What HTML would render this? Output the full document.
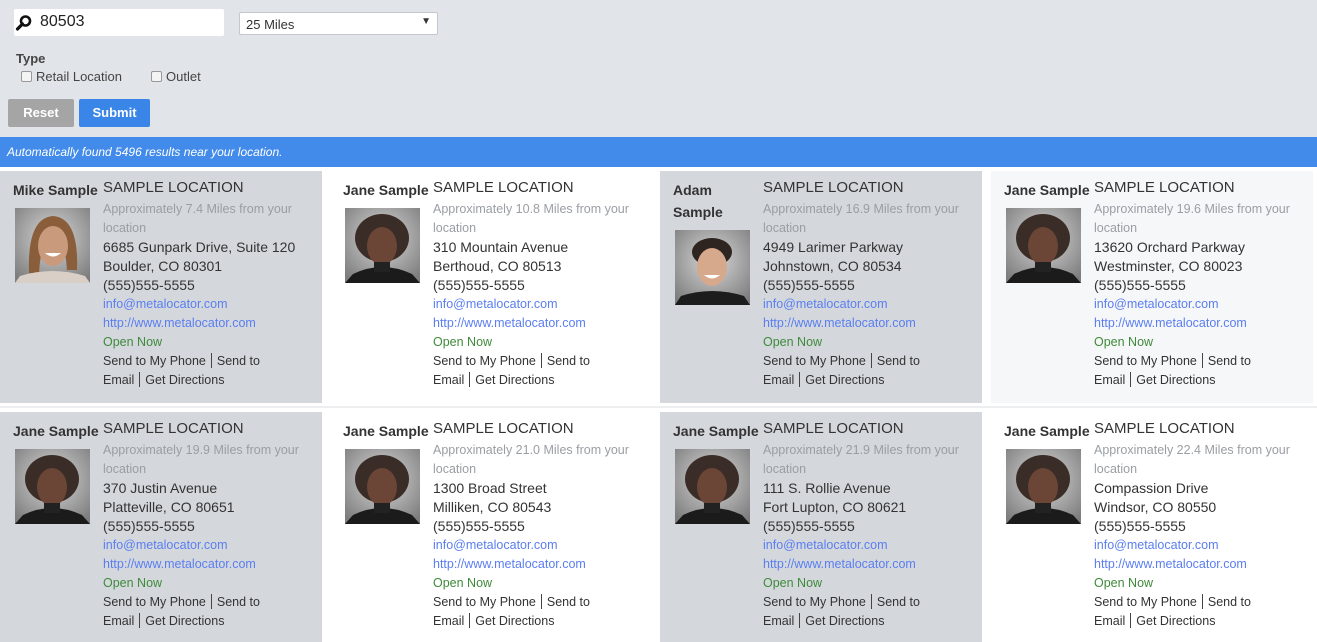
<!DOCTYPE html>
<html><head><meta charset="utf-8">
<style>
*{box-sizing:border-box;margin:0;padding:0}
body{width:1317px;height:642px;overflow:hidden;background:#fff;font-family:"Liberation Sans",sans-serif;color:#333;position:relative}
.top{position:absolute;left:0;top:0;width:1317px;height:137px;background:#e1e4e8}
.inp{position:absolute;left:14px;top:9px;width:210px;height:27px;background:#fff;border-radius:2px}
.inp span{position:absolute;left:26px;top:4px;font-size:16px;color:#222}
.sel{position:absolute;left:239px;top:12px;width:199px;height:23px;background:#fff;border:1px solid #c4c7cb;border-radius:2px;font-size:13px;padding:4px 6px;color:#333}
.sel b{position:absolute;right:6px;top:3px;font-size:10px}
.type{position:absolute;left:16px;top:51px;font-size:13px;font-weight:bold;color:#444}
.cb{position:absolute;top:69px;font-size:13px;color:#444}
.cb i{display:inline-block;width:11px;height:11px;border:1px solid #999;border-radius:2px;background:#f4f4f4;vertical-align:-1px;margin-right:4px}
.btn{position:absolute;top:99px;height:28px;color:#fff;font-weight:bold;font-size:13px;text-align:center;line-height:28px;border-radius:2px}
.bar{position:absolute;left:0;top:137px;width:1317px;height:30px;background:#428bea;color:#fff;font-style:italic;font-size:12px;line-height:30px;padding-left:7px}
.sep{position:absolute;left:0;top:406px;width:1317px;height:2px;background:#eceef0}
.card{position:absolute;width:322px}
.g{background:#d4d8dd}.l{background:#f6f7f9}.w{background:#fff}
.nm{position:absolute;left:13px;top:8px;width:90px;font-weight:bold;font-size:14px;line-height:22px;color:#333}
.ph{position:absolute;left:15px;width:75px;height:75px}
.inf{position:absolute;left:103px;top:7px;width:215px;font-size:12.5px;line-height:19px;white-space:nowrap}
.inf .t{font-size:15px;line-height:20px;color:#333;margin-bottom:2px}
.gr{color:#9a9ea3}.ad{font-size:14px;color:#333}.lk{color:#5a7ef0}.op{color:#3f8a3a}.sd{color:#333}
.sd s{text-decoration:none;border-left:1px solid #444;margin:0 5px;display:inline-block;height:15px;vertical-align:-3px}
</style></head><body>
<svg width="0" height="0" style="position:absolute">
<defs>
<radialGradient id="bg" cx="50%" cy="40%" r="70%"><stop offset="0" stop-color="#d8d8d8"/><stop offset="1" stop-color="#7d7d7d"/></radialGradient>
<symbol id="jane" viewBox="0 0 75 75"><rect width="75" height="75" fill="url(#bg)"/><ellipse cx="37" cy="30" rx="27" ry="24" fill="#3a2c26"/><ellipse cx="37" cy="38" rx="15" ry="19" fill="#6b4535"/><path d="M0 75 L8 66 Q37 52 67 66 L75 75Z" fill="#1b1b1b"/><rect x="29" y="54" width="16" height="10" fill="#222"/></symbol>
<symbol id="mike" viewBox="0 0 75 75"><rect width="75" height="75" fill="url(#bg)"/><path d="M14 65 Q12 10 38 8 Q64 10 62 62 L52 62 Q50 30 38 30 Q26 30 24 65Z" fill="#8a5e3a"/><ellipse cx="38" cy="38" rx="15" ry="20" fill="#c99a7c"/><path d="M30 45 Q38 52 46 45Z" fill="#fff"/><path d="M0 75 L5 68 Q38 58 70 68 L75 75Z" fill="#d9cfc6"/></symbol>
<symbol id="adam" viewBox="0 0 75 75"><rect width="75" height="75" fill="url(#bg)"/><ellipse cx="37" cy="22" rx="20" ry="14" fill="#2e2520"/><ellipse cx="37" cy="37" rx="15" ry="19" fill="#d6a88c"/><path d="M29 45 Q37 52 45 45Z" fill="#fff"/><path d="M0 75 L6 66 Q37 56 69 66 L75 75Z" fill="#1c1c1c"/></symbol>
</defs></svg>

<div class="top"></div>
<div class="inp"><svg style="position:absolute;left:1px;top:5px" width="18" height="18" viewBox="0 0 18 18"><circle cx="10.5" cy="7" r="4.5" fill="none" stroke="#111" stroke-width="2.6"/><path d="M7.5 10 L2.5 15" stroke="#111" stroke-width="3.2" stroke-linecap="round"/></svg><span>80503</span></div>
<div class="sel">25 Miles<b>▼</b></div>
<div class="type">Type</div>
<div class="cb" style="left:21px"><i></i>Retail Location</div>
<div class="cb" style="left:151px"><i></i>Outlet</div>
<div class="btn" style="left:8px;width:66px;background:#a5a5a5">Reset</div>
<div class="btn" style="left:79px;width:71px;background:#3a86e8">Submit</div>
<div class="bar">Automatically found 5496 results near your location.</div>
<div class="sep"></div>

<div class="card g" style="left:0;top:171px;height:232px"><div class="nm">Mike Sample</div><svg class="ph" style="top:37px"><use href="#mike"/></svg>
<div class="inf"><div class="t">SAMPLE LOCATION</div><div class="gr">Approximately 7.4 Miles from your<br>location</div><div class="ad">6685 Gunpark Drive, Suite 120<br>Boulder, CO 80301<br>(555)555-5555</div><div class="lk">info@metalocator.com<br>http://www.metalocator.com</div><div class="op">Open Now</div><div class="sd">Send to My Phone<s></s>Send to<br>Email<s></s>Get Directions</div></div></div>

<div class="card w" style="left:330px;top:171px;height:232px"><div class="nm">Jane Sample</div><svg class="ph" style="top:37px"><use href="#jane"/></svg>
<div class="inf"><div class="t">SAMPLE LOCATION</div><div class="gr">Approximately 10.8 Miles from your<br>location</div><div class="ad">310 Mountain Avenue<br>Berthoud, CO 80513<br>(555)555-5555</div><div class="lk">info@metalocator.com<br>http://www.metalocator.com</div><div class="op">Open Now</div><div class="sd">Send to My Phone<s></s>Send to<br>Email<s></s>Get Directions</div></div></div>

<div class="card g" style="left:660px;top:171px;height:232px"><div class="nm">Adam<br>Sample</div><svg class="ph" style="top:59px"><use href="#adam"/></svg>
<div class="inf"><div class="t">SAMPLE LOCATION</div><div class="gr">Approximately 16.9 Miles from your<br>location</div><div class="ad">4949 Larimer Parkway<br>Johnstown, CO 80534<br>(555)555-5555</div><div class="lk">info@metalocator.com<br>http://www.metalocator.com</div><div class="op">Open Now</div><div class="sd">Send to My Phone<s></s>Send to<br>Email<s></s>Get Directions</div></div></div>

<div class="card l" style="left:991px;top:171px;height:232px"><div class="nm">Jane Sample</div><svg class="ph" style="top:37px"><use href="#jane"/></svg>
<div class="inf"><div class="t">SAMPLE LOCATION</div><div class="gr">Approximately 19.6 Miles from your<br>location</div><div class="ad">13620 Orchard Parkway<br>Westminster, CO 80023<br>(555)555-5555</div><div class="lk">info@metalocator.com<br>http://www.metalocator.com</div><div class="op">Open Now</div><div class="sd">Send to My Phone<s></s>Send to<br>Email<s></s>Get Directions</div></div></div>

<div class="card g" style="left:0;top:412px;height:230px"><div class="nm">Jane Sample</div><svg class="ph" style="top:37px"><use href="#jane"/></svg>
<div class="inf"><div class="t">SAMPLE LOCATION</div><div class="gr">Approximately 19.9 Miles from your<br>location</div><div class="ad">370 Justin Avenue<br>Platteville, CO 80651<br>(555)555-5555</div><div class="lk">info@metalocator.com<br>http://www.metalocator.com</div><div class="op">Open Now</div><div class="sd">Send to My Phone<s></s>Send to<br>Email<s></s>Get Directions</div></div></div>

<div class="card w" style="left:330px;top:412px;height:230px"><div class="nm">Jane Sample</div><svg class="ph" style="top:37px"><use href="#jane"/></svg>
<div class="inf"><div class="t">SAMPLE LOCATION</div><div class="gr">Approximately 21.0 Miles from your<br>location</div><div class="ad">1300 Broad Street<br>Milliken, CO 80543<br>(555)555-5555</div><div class="lk">info@metalocator.com<br>http://www.metalocator.com</div><div class="op">Open Now</div><div class="sd">Send to My Phone<s></s>Send to<br>Email<s></s>Get Directions</div></div></div>

<div class="card g" style="left:660px;top:412px;height:230px"><div class="nm">Jane Sample</div><svg class="ph" style="top:37px"><use href="#jane"/></svg>
<div class="inf"><div class="t">SAMPLE LOCATION</div><div class="gr">Approximately 21.9 Miles from your<br>location</div><div class="ad">111 S. Rollie Avenue<br>Fort Lupton, CO 80621<br>(555)555-5555</div><div class="lk">info@metalocator.com<br>http://www.metalocator.com</div><div class="op">Open Now</div><div class="sd">Send to My Phone<s></s>Send to<br>Email<s></s>Get Directions</div></div></div>

<div class="card w" style="left:991px;top:412px;height:230px"><div class="nm">Jane Sample</div><svg class="ph" style="top:37px"><use href="#jane"/></svg>
<div class="inf"><div class="t">SAMPLE LOCATION</div><div class="gr">Approximately 22.4 Miles from your<br>location</div><div class="ad">Compassion Drive<br>Windsor, CO 80550<br>(555)555-5555</div><div class="lk">info@metalocator.com<br>http://www.metalocator.com</div><div class="op">Open Now</div><div class="sd">Send to My Phone<s></s>Send to<br>Email<s></s>Get Directions</div></div></div>
</body></html>
